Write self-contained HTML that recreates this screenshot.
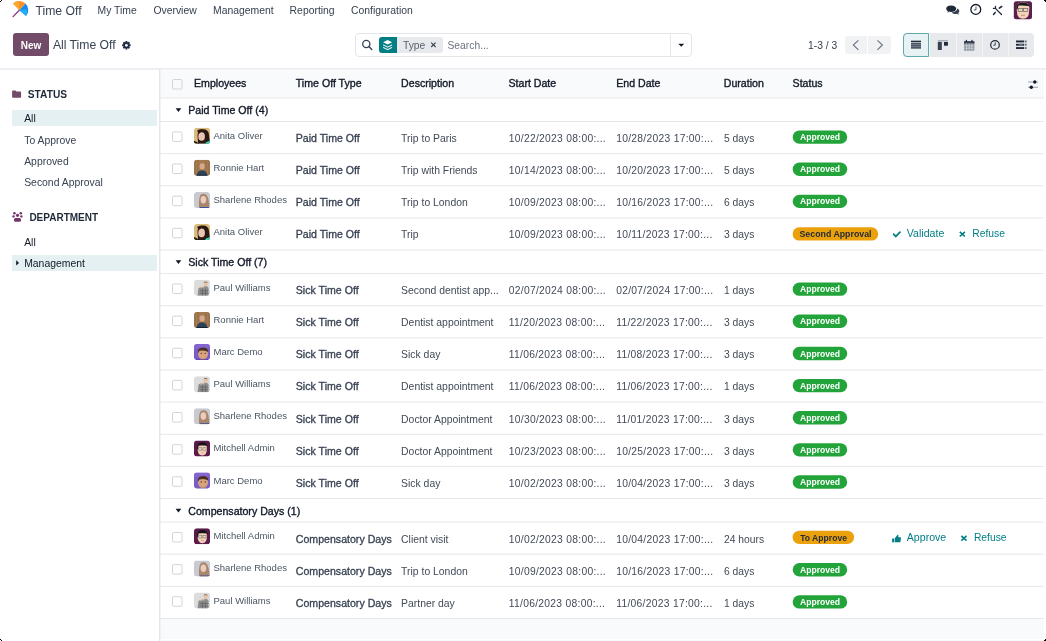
<!DOCTYPE html>
<html><head><meta charset="utf-8"><style>
html,body{margin:0;padding:0;}
body{width:1046px;height:641px;overflow:hidden;position:relative;background:#fff;font-family:"Liberation Sans", sans-serif;}
.t{position:absolute;white-space:nowrap;line-height:1;}
svg.ov{position:absolute;left:0;top:0;}
</style></head><body>
<div style="position:absolute;left:12.5px;top:33px;width:36px;height:23px;background:#714B67;border-radius:3px"></div>
<div style="position:absolute;left:355px;top:33px;width:336.5px;height:24px;border:1px solid #E3E6EA;border-radius:4px;box-sizing:border-box;background:#fff"></div>
<div style="position:absolute;left:670px;top:34px;width:1px;height:22px;background:#E5E7EB"></div>
<div style="position:absolute;left:379px;top:37px;width:63.5px;height:16px;background:#E7E9ED;border-radius:3px"></div>
<div style="position:absolute;left:379px;top:37px;width:17.5px;height:16px;background:#017E84;border-radius:3px 0 0 3px"></div>
<div style="position:absolute;left:844.5px;top:36px;width:46.5px;height:18px;background:#F1F2F4;border-radius:3px"></div>
<div style="position:absolute;left:867.3px;top:36px;width:1px;height:18px;background:#fff"></div>
<div style="position:absolute;left:903px;top:33px;width:131px;height:23.5px;background:#E7E9ED;border-radius:4px"></div>
<div style="position:absolute;left:929px;top:33px;width:1px;height:23.5px;background:#F3F4F6"></div>
<div style="position:absolute;left:956px;top:33px;width:1px;height:23.5px;background:#F3F4F6"></div>
<div style="position:absolute;left:982px;top:33px;width:1px;height:23.5px;background:#F3F4F6"></div>
<div style="position:absolute;left:1007.6px;top:33px;width:1px;height:23.5px;background:#F3F4F6"></div>
<div style="position:absolute;left:903px;top:33px;width:26px;height:23.5px;background:#E6F2F3;border:1px solid #5FA8AC;border-radius:4px 0 0 4px;box-sizing:border-box"></div>
<div style="position:absolute;left:12px;top:110px;width:145px;height:16px;background:#E4F0F1"></div>
<div style="position:absolute;left:12px;top:254.5px;width:145px;height:16px;background:#E4F0F1"></div>
<svg class="ov" width="1046" height="641" viewBox="0 0 1046 641">
<g>
<path d="M19.25 10.2 L13.1 16.6" stroke="#8B2F7A" stroke-width="1.25" stroke-linecap="round"/>
<path d="M19.25 10.2 L13 3.4 A9.2 9.2 0 0 1 25.6 3.6 Z" fill="#F7931E"/>
<path d="M19.25 10.2 L13 3.4 A9.2 9.2 0 0 1 19.0 1.0 Z" fill="#FBB03B" opacity="0.7"/>
<path d="M19.25 10.2 L25.6 3.6 A9 9 0 0 1 26.1 15.9 Z" fill="#1A8CF0"/>
<path d="M19.25 10.2 L26.6 9.5 A9 9 0 0 1 26.1 15.9 Z" fill="#29B6F6" opacity="0.8"/>
</g>
<g fill="#1F2937">
<path d="M951 5.5 C954.5 5.5 956.2 7 956.2 8.7 C956.2 10.5 954.3 11.9 951 11.9 C950.2 11.9 949.5 11.8 949 11.6 L947.6 13 L947.9 11.1 C946.8 10.5 946.2 9.7 946.2 8.7 C946.2 7 947.8 5.5 951 5.5 Z"/>
<path d="M957.2 8.6 C958.6 9.2 959.3 10.1 959.3 11.2 C959.3 12 958.9 12.7 958.3 13.1 L958.7 14.7 L957 13.7 C956.5 13.8 956 13.9 955.5 13.9 C953.6 13.9 952.3 13.3 951.6 12.4 C955 12.2 957.3 10.7 957.2 8.6 Z" fill="#374151"/>
</g>
<circle cx="975.8" cy="9.4" r="4.9" fill="none" stroke="#111827" stroke-width="1.3"/><path d="M976 6.5 V9.9 H973.9" fill="none" stroke="#4B5563" stroke-width="1"/>
<g stroke="#1F2937" stroke-linecap="round">
<path d="M995.6 8.6 L1001.5 14.5" stroke-width="1.3"/>
<path d="M995.5 6.4 V8.4 H993.4" stroke-width="1.2" fill="none"/>
<path d="M1001.7 6.5 L999.3 8.1" stroke-width="1.6"/>
<path d="M995.2 12.4 L993.5 14.4" stroke-width="1.5"/>
</g>
<g>
<rect x="1013.8" y="1.2" width="18.2" height="18" rx="2.5" fill="#5B1F4E"/>
<path d="M1016.5 7 Q1017 2.5 1023 2.6 Q1029 2.5 1029.5 7 L1029 12 Q1029 18.5 1023 18.8 Q1017 18.5 1017 12 Z" fill="#F4D3B8"/>
<path d="M1016.2 8.5 Q1016 2.6 1023 2.5 Q1030 2.6 1029.8 8 L1028.6 6 Q1024 5.2 1018.5 5.6 L1017.4 9.8 Z" fill="#1A1A1A"/>
<rect x="1018.2" y="8.4" width="4.2" height="3" fill="none" stroke="#666" stroke-width="0.7"/>
<rect x="1023.6" y="8.4" width="4.2" height="3" fill="none" stroke="#666" stroke-width="0.7"/>
<path d="M1021 15 Q1023 16 1025 15" stroke="#9a6a5a" stroke-width="0.6" fill="none"/>
</g>
<g transform="translate(126.4 45.3)" fill="#1F2A44"><rect x="-1" y="-4.3" width="2" height="2.4" rx="0.6" transform="rotate(0)"/><rect x="-1" y="-4.3" width="2" height="2.4" rx="0.6" transform="rotate(45)"/><rect x="-1" y="-4.3" width="2" height="2.4" rx="0.6" transform="rotate(90)"/><rect x="-1" y="-4.3" width="2" height="2.4" rx="0.6" transform="rotate(135)"/><rect x="-1" y="-4.3" width="2" height="2.4" rx="0.6" transform="rotate(180)"/><rect x="-1" y="-4.3" width="2" height="2.4" rx="0.6" transform="rotate(225)"/><rect x="-1" y="-4.3" width="2" height="2.4" rx="0.6" transform="rotate(270)"/><rect x="-1" y="-4.3" width="2" height="2.4" rx="0.6" transform="rotate(315)"/><circle r="3" fill="#1F2A44"/><circle r="1.4" fill="#fff"/></g>
<circle cx="366.3" cy="44" r="3.6" fill="none" stroke="#374151" stroke-width="1.3"/><path d="M368.9 46.6 L371.8 49.4" stroke="#374151" stroke-width="1.4" stroke-linecap="round"/>
<path d="M678.3 43.8 H684.2 L681.25 46.8 Z" fill="#111827"/>
<g fill="#fff"><path d="M387.6 40 L392.1 42.3 L387.6 44.6 L383.1 42.3 Z"/>
<path d="M383.1 44.2 L387.6 46.5 L392.1 44.2 V45.4 L387.6 47.7 L383.1 45.4 Z" opacity="0.85"/>
<path d="M383.1 46.8 L387.6 49.1 L392.1 46.8 V48 L387.6 50.3 L383.1 48 Z" opacity="0.85"/></g>
<path d="M431.2 42.6 L435.6 47 M435.6 42.6 L431.2 47" stroke="#374151" stroke-width="1.1"/>
<path d="M858.4 40.3 L853.3 45 L858.4 49.8" fill="none" stroke="#6B7280" stroke-width="1.1"/><path d="M877.4 40.3 L882.4 45 L877.4 49.8" fill="none" stroke="#6B7280" stroke-width="1.1"/>
<rect x="911" y="40.7" width="10" height="1.2" fill="#111827"/><rect x="911" y="42.6" width="10" height="6.1" fill="#4B5563"/><path d="M911 44.6 H921 M911 46.6 H921" stroke="#9CA3AF" stroke-width="0.5"/>
<rect x="937.8" y="40.2" width="10.1" height="1.2" fill="#9CA3AF"/><rect x="937.8" y="41.9" width="4" height="8.1" fill="#374151"/><rect x="944" y="42" width="3.9" height="3.7" fill="#1F2937"/>
<rect x="964" y="41.2" width="10.4" height="9.5" rx="1.2" fill="#8B929C"/><rect x="964" y="41.2" width="10.4" height="2.2" fill="#374151"/><rect x="965.8" y="39.9" width="1.2" height="2.5" fill="#1F2937"/><rect x="971.4" y="39.9" width="1.2" height="2.5" fill="#1F2937"/><path d="M966.6 43.4 V50.7 M969.2 43.4 V50.7 M971.8 43.4 V50.7 M964 45.8 H974.4 M964 48.2 H974.4" stroke="#E5E7EB" stroke-width="0.6"/>
<circle cx="995" cy="44.9" r="4.3" fill="none" stroke="#1F2937" stroke-width="1.2"/><path d="M995.2 42.4 V45.2 H993.4" fill="none" stroke="#374151" stroke-width="1"/>
<g fill="#1F2937"><rect x="1016" y="40.5" width="8" height="1.9"/><rect x="1016" y="43.8" width="8" height="1.9"/><rect x="1016" y="47.1" width="8" height="1.9"/></g><g fill="#6B7280"><rect x="1024.6" y="40.5" width="2.1" height="1.9"/><rect x="1024.6" y="43.8" width="2.1" height="1.9"/><rect x="1024.6" y="47.1" width="2.1" height="1.9"/></g><rect x="1019" y="43.8" width="4" height="1.9" fill="#6B7280"/>
<rect x="0" y="68.3" width="1046" height="1.3" fill="#E5E7EB"/>
<path d="M12.1 91.2 Q12.1 90.4 12.9 90.4 H15.4 L16.3 91.6 H20.3 Q21.1 91.6 21.1 92.4 V97 Q21.1 97.8 20.3 97.8 H12.9 Q12.1 97.8 12.1 97 Z" fill="#714B67"/>
<g fill="#74356B"><circle cx="14.4" cy="213.3" r="1.3"/><circle cx="20.8" cy="213.3" r="1.3"/><circle cx="13.5" cy="216.4" r="1.2"/><circle cx="21.4" cy="216.4" r="1.2"/><circle cx="17.5" cy="215.3" r="1.6"/>
<path d="M14 219.4 Q14 217.9 15.4 217.9 H19.6 Q21 217.9 21 219.4 V220.2 Q21 221.7 19.5 221.7 H15.5 Q14 221.7 14 220.2 Z"/></g>
<path d="M16.2 260.2 L19 262.9 L16.2 265.6 Z" fill="#111827"/>
<rect x="160" y="70.6" width="884" height="27" fill="#F9FAFB"/>
<rect x="160" y="97.5" width="884" height="1" fill="#E5E7EB"/>
<rect x="172.5" y="79.5" width="9.5" height="9.5" rx="1" fill="none" stroke="#D1D5DB" stroke-width="1"/>
<path d="M1028 82 H1038 M1028 87.3 H1038" stroke="#9CA3AF" stroke-width="1.1"/><circle cx="1034.8" cy="82" r="1.7" fill="#111827"/><circle cx="1031.3" cy="87.3" r="1.7" fill="#111827"/>
<path d="M175.6 108.30 H181.3 L178.45 111.90 Z" fill="#111827"/>
<rect x="160" y="121.00" width="884" height="1" fill="#E5E7EB"/>
<rect x="172.5" y="131.90" width="9.5" height="9.5" rx="1" fill="#fff" stroke="#D1D5DB" stroke-width="1"/>
<g transform="translate(194 127.70)"><clipPath id="c1215"><rect width="16" height="16" rx="2.5"/></clipPath><g clip-path="url(#c1215)"><rect width="16" height="16" rx="2.5" fill="#D9BC7C"/><path d="M4 16 L3.5 7 Q4 1.5 9 1.5 Q14.5 1.5 15 7 L16 16 Z" fill="#2A1812"/><ellipse cx="7.6" cy="8.8" rx="3.3" ry="4.3" fill="#EBC3B5"/><path d="M3 3 Q6 1 9 2 L5 6 Z" fill="#2A1812"/><path d="M12 14.5 L16 13 V16 H11 Z" fill="#3FD6C0"/><path d="M0 13 Q3 14 5 16 H0 Z" fill="#1b1010"/></g></g>
<rect x="792.7" y="130.40" width="54.5" height="13.4" rx="6.7" fill="#23A43A"/>
<rect x="160" y="153.14" width="884" height="1" fill="#E5E7EB"/>
<rect x="172.5" y="164.04" width="9.5" height="9.5" rx="1" fill="#fff" stroke="#D1D5DB" stroke-width="1"/>
<g transform="translate(194 159.84)"><clipPath id="c1536"><rect width="16" height="16" rx="2.5"/></clipPath><g clip-path="url(#c1536)"><rect width="16" height="16" rx="2.5" fill="#A57B52"/><path d="M1 0 V16 M4 0 V16 M12 0 V16 M15 0 V16" stroke="#8B6340" stroke-width="0.6"/><ellipse cx="8.2" cy="6.5" rx="2.6" ry="3.2" fill="#D2AA8F"/><path d="M2.5 16 Q3 10.5 8 10.3 Q13 10.5 13.5 16 Z" fill="#2D4458"/><path d="M2.5 16 H13.5 V15 H2.5Z" fill="#14203a"/></g></g>
<rect x="792.7" y="162.54" width="54.5" height="13.4" rx="6.7" fill="#23A43A"/>
<rect x="160" y="185.28" width="884" height="1" fill="#E5E7EB"/>
<rect x="172.5" y="196.18" width="9.5" height="9.5" rx="1" fill="#fff" stroke="#D1D5DB" stroke-width="1"/>
<g transform="translate(194 191.98)"><clipPath id="c1858"><rect width="16" height="16" rx="2.5"/></clipPath><g clip-path="url(#c1858)"><rect width="16" height="16" rx="2.5" fill="#C9C9D2"/><path d="M5 16 Q4.5 6 6.5 3 Q9 1 12 2.5 Q15 5 15.5 16 Z" fill="#A9876C"/><ellipse cx="9.4" cy="7.8" rx="2.8" ry="3.8" fill="#EBCBBE"/><path d="M6 15 H16 V16 H6Z" fill="#3b4fa0"/></g></g>
<rect x="792.7" y="194.68" width="54.5" height="13.4" rx="6.7" fill="#23A43A"/>
<rect x="160" y="217.42" width="884" height="1" fill="#E5E7EB"/>
<rect x="172.5" y="228.32" width="9.5" height="9.5" rx="1" fill="#fff" stroke="#D1D5DB" stroke-width="1"/>
<g transform="translate(194 224.12)"><clipPath id="c2179"><rect width="16" height="16" rx="2.5"/></clipPath><g clip-path="url(#c2179)"><rect width="16" height="16" rx="2.5" fill="#D9BC7C"/><path d="M4 16 L3.5 7 Q4 1.5 9 1.5 Q14.5 1.5 15 7 L16 16 Z" fill="#2A1812"/><ellipse cx="7.6" cy="8.8" rx="3.3" ry="4.3" fill="#EBC3B5"/><path d="M3 3 Q6 1 9 2 L5 6 Z" fill="#2A1812"/><path d="M12 14.5 L16 13 V16 H11 Z" fill="#3FD6C0"/><path d="M0 13 Q3 14 5 16 H0 Z" fill="#1b1010"/></g></g>
<rect x="792.6" y="227.32" width="85.6" height="13.3" rx="6.65" fill="#EBA10C"/>
<path d="M893.1 233.72 L895.8 236.42 L900.5 231.62" fill="none" stroke="#017E84" stroke-width="1.7"/>
<path d="M959.8 231.82 L964.9 236.52 M964.9 231.82 L959.8 236.52" stroke="#017E84" stroke-width="1.6"/>
<rect x="160" y="249.56" width="884" height="1" fill="#E5E7EB"/>
<path d="M175.6 260.36 H181.3 L178.45 263.96 Z" fill="#111827"/>
<rect x="160" y="273.06" width="884" height="1" fill="#E5E7EB"/>
<rect x="172.5" y="283.96" width="9.5" height="9.5" rx="1" fill="#fff" stroke="#D1D5DB" stroke-width="1"/>
<g transform="translate(194 279.76)"><clipPath id="c2736"><rect width="16" height="16" rx="2.5"/></clipPath><g clip-path="url(#c2736)"><rect width="16" height="16" rx="2.5" fill="#DCDCDC"/><path d="M3.5 16 L4.5 8.2 Q8 6.5 10 7.5 L11 5 Q13 6.5 14.5 8 L14.5 16 Z" fill="#8E8E8E"/><path d="M8.5 9 V16 M11.5 9 V16 M6 11 H14.5 M6 13.5 H14.5" stroke="#5A5A5A" stroke-width="0.6"/><ellipse cx="11.7" cy="4.5" rx="2" ry="2.3" fill="#E8C5A8"/><path d="M9.8 3.3 Q11.5 1.8 13.6 3.3 L13.3 2.2 Q11.5 1.2 10 2.3Z" fill="#8a4a2a"/><path d="M6.2 7.4 L10 6.4 L10.3 7.6 L6.5 8.6Z" fill="#D9B58A"/></g></g>
<rect x="792.7" y="282.46" width="54.5" height="13.4" rx="6.7" fill="#23A43A"/>
<rect x="160" y="305.20" width="884" height="1" fill="#E5E7EB"/>
<rect x="172.5" y="316.10" width="9.5" height="9.5" rx="1" fill="#fff" stroke="#D1D5DB" stroke-width="1"/>
<g transform="translate(194 311.90)"><clipPath id="c3057"><rect width="16" height="16" rx="2.5"/></clipPath><g clip-path="url(#c3057)"><rect width="16" height="16" rx="2.5" fill="#A57B52"/><path d="M1 0 V16 M4 0 V16 M12 0 V16 M15 0 V16" stroke="#8B6340" stroke-width="0.6"/><ellipse cx="8.2" cy="6.5" rx="2.6" ry="3.2" fill="#D2AA8F"/><path d="M2.5 16 Q3 10.5 8 10.3 Q13 10.5 13.5 16 Z" fill="#2D4458"/><path d="M2.5 16 H13.5 V15 H2.5Z" fill="#14203a"/></g></g>
<rect x="792.7" y="314.60" width="54.5" height="13.4" rx="6.7" fill="#23A43A"/>
<rect x="160" y="337.34" width="884" height="1" fill="#E5E7EB"/>
<rect x="172.5" y="348.24" width="9.5" height="9.5" rx="1" fill="#fff" stroke="#D1D5DB" stroke-width="1"/>
<g transform="translate(194 344.04)"><clipPath id="c3378"><rect width="16" height="16" rx="2.5"/></clipPath><g clip-path="url(#c3378)"><rect width="16" height="16" rx="2.5" fill="#7A5CC9"/><path d="M0 0 H16 V5 Q8 2 0 5 Z" fill="#8A6AD6" opacity="0.6"/><ellipse cx="9" cy="9.6" rx="5" ry="5.9" fill="#D7A47E"/><path d="M3.8 9.5 Q3.3 3.3 9 3.4 Q14.2 3.4 14.2 8 Q11 5.6 5.5 6.8 Z" fill="#4A3020"/><circle cx="7.3" cy="9.3" r="0.7" fill="#3a2a20"/><circle cx="11.2" cy="9.3" r="0.7" fill="#3a2a20"/><path d="M5.5 13 Q9 16 12.5 13 L12 15.5 H6 Z" fill="#B88560" opacity="0.6"/><path d="M2 16 H14 V15.5 H2Z" fill="#4b2bb0"/></g></g>
<rect x="792.7" y="346.74" width="54.5" height="13.4" rx="6.7" fill="#23A43A"/>
<rect x="160" y="369.48" width="884" height="1" fill="#E5E7EB"/>
<rect x="172.5" y="380.38" width="9.5" height="9.5" rx="1" fill="#fff" stroke="#D1D5DB" stroke-width="1"/>
<g transform="translate(194 376.18)"><clipPath id="c3700"><rect width="16" height="16" rx="2.5"/></clipPath><g clip-path="url(#c3700)"><rect width="16" height="16" rx="2.5" fill="#DCDCDC"/><path d="M3.5 16 L4.5 8.2 Q8 6.5 10 7.5 L11 5 Q13 6.5 14.5 8 L14.5 16 Z" fill="#8E8E8E"/><path d="M8.5 9 V16 M11.5 9 V16 M6 11 H14.5 M6 13.5 H14.5" stroke="#5A5A5A" stroke-width="0.6"/><ellipse cx="11.7" cy="4.5" rx="2" ry="2.3" fill="#E8C5A8"/><path d="M9.8 3.3 Q11.5 1.8 13.6 3.3 L13.3 2.2 Q11.5 1.2 10 2.3Z" fill="#8a4a2a"/><path d="M6.2 7.4 L10 6.4 L10.3 7.6 L6.5 8.6Z" fill="#D9B58A"/></g></g>
<rect x="792.7" y="378.88" width="54.5" height="13.4" rx="6.7" fill="#23A43A"/>
<rect x="160" y="401.62" width="884" height="1" fill="#E5E7EB"/>
<rect x="172.5" y="412.52" width="9.5" height="9.5" rx="1" fill="#fff" stroke="#D1D5DB" stroke-width="1"/>
<g transform="translate(194 408.32)"><clipPath id="c4021"><rect width="16" height="16" rx="2.5"/></clipPath><g clip-path="url(#c4021)"><rect width="16" height="16" rx="2.5" fill="#C9C9D2"/><path d="M5 16 Q4.5 6 6.5 3 Q9 1 12 2.5 Q15 5 15.5 16 Z" fill="#A9876C"/><ellipse cx="9.4" cy="7.8" rx="2.8" ry="3.8" fill="#EBCBBE"/><path d="M6 15 H16 V16 H6Z" fill="#3b4fa0"/></g></g>
<rect x="792.7" y="411.02" width="54.5" height="13.4" rx="6.7" fill="#23A43A"/>
<rect x="160" y="433.76" width="884" height="1" fill="#E5E7EB"/>
<rect x="172.5" y="444.66" width="9.5" height="9.5" rx="1" fill="#fff" stroke="#D1D5DB" stroke-width="1"/>
<g transform="translate(194 440.46)"><clipPath id="c4343"><rect width="16" height="16" rx="2.5"/></clipPath><g clip-path="url(#c4343)"><rect width="16" height="16" rx="2.5" fill="#5A1B4C"/><path d="M3.5 8 Q3.5 14.8 8.3 15 Q13 14.8 13 8 L12.6 5 H4 Z" fill="#F4D2B6"/><path d="M3 8.5 Q2.7 1.8 8.2 1.8 Q13.8 1.8 13.6 7 L12.5 5 Q8 4.3 4.6 5 L4 9Z" fill="#151515"/><rect x="4.7" y="7.3" width="3.2" height="2.4" fill="none" stroke="#777" stroke-width="0.6"/><rect x="8.9" y="7.3" width="3.2" height="2.4" fill="none" stroke="#777" stroke-width="0.6"/><path d="M7 12.2 Q8.4 13 9.8 12.2" stroke="#b08070" stroke-width="0.5" fill="none"/></g></g>
<rect x="792.7" y="443.16" width="54.5" height="13.4" rx="6.7" fill="#23A43A"/>
<rect x="160" y="465.90" width="884" height="1" fill="#E5E7EB"/>
<rect x="172.5" y="476.80" width="9.5" height="9.5" rx="1" fill="#fff" stroke="#D1D5DB" stroke-width="1"/>
<g transform="translate(194 472.60)"><clipPath id="c4664"><rect width="16" height="16" rx="2.5"/></clipPath><g clip-path="url(#c4664)"><rect width="16" height="16" rx="2.5" fill="#7A5CC9"/><path d="M0 0 H16 V5 Q8 2 0 5 Z" fill="#8A6AD6" opacity="0.6"/><ellipse cx="9" cy="9.6" rx="5" ry="5.9" fill="#D7A47E"/><path d="M3.8 9.5 Q3.3 3.3 9 3.4 Q14.2 3.4 14.2 8 Q11 5.6 5.5 6.8 Z" fill="#4A3020"/><circle cx="7.3" cy="9.3" r="0.7" fill="#3a2a20"/><circle cx="11.2" cy="9.3" r="0.7" fill="#3a2a20"/><path d="M5.5 13 Q9 16 12.5 13 L12 15.5 H6 Z" fill="#B88560" opacity="0.6"/><path d="M2 16 H14 V15.5 H2Z" fill="#4b2bb0"/></g></g>
<rect x="792.7" y="475.30" width="54.5" height="13.4" rx="6.7" fill="#23A43A"/>
<rect x="160" y="498.04" width="884" height="1" fill="#E5E7EB"/>
<path d="M175.6 508.84 H181.3 L178.45 512.44 Z" fill="#111827"/>
<rect x="160" y="521.54" width="884" height="1" fill="#E5E7EB"/>
<rect x="172.5" y="532.44" width="9.5" height="9.5" rx="1" fill="#fff" stroke="#D1D5DB" stroke-width="1"/>
<g transform="translate(194 528.24)"><clipPath id="c5220"><rect width="16" height="16" rx="2.5"/></clipPath><g clip-path="url(#c5220)"><rect width="16" height="16" rx="2.5" fill="#5A1B4C"/><path d="M3.5 8 Q3.5 14.8 8.3 15 Q13 14.8 13 8 L12.6 5 H4 Z" fill="#F4D2B6"/><path d="M3 8.5 Q2.7 1.8 8.2 1.8 Q13.8 1.8 13.6 7 L12.5 5 Q8 4.3 4.6 5 L4 9Z" fill="#151515"/><rect x="4.7" y="7.3" width="3.2" height="2.4" fill="none" stroke="#777" stroke-width="0.6"/><rect x="8.9" y="7.3" width="3.2" height="2.4" fill="none" stroke="#777" stroke-width="0.6"/><path d="M7 12.2 Q8.4 13 9.8 12.2" stroke="#b08070" stroke-width="0.5" fill="none"/></g></g>
<rect x="792.6" y="530.64" width="61.5" height="13.4" rx="6.7" fill="#EBA10C"/>
<g fill="#017E84" transform="translate(0 522.54)"><rect x="892.1" y="16" width="2" height="3.8"/><path d="M894.7 16 L897 13 Q897.5 11.8 898.2 12.2 Q898.8 12.8 898.3 14.6 H900.3 Q901.1 14.7 901 15.5 L900.4 19.2 Q900.2 19.8 899.5 19.8 H894.7 Z"/></g>
<path d="M961.3 535.84 L966.5 540.54 M966.5 535.84 L961.3 540.54" stroke="#017E84" stroke-width="1.6"/>
<rect x="160" y="553.68" width="884" height="1" fill="#E5E7EB"/>
<rect x="172.5" y="564.58" width="9.5" height="9.5" rx="1" fill="#fff" stroke="#D1D5DB" stroke-width="1"/>
<g transform="translate(194 560.38)"><clipPath id="c5542"><rect width="16" height="16" rx="2.5"/></clipPath><g clip-path="url(#c5542)"><rect width="16" height="16" rx="2.5" fill="#C9C9D2"/><path d="M5 16 Q4.5 6 6.5 3 Q9 1 12 2.5 Q15 5 15.5 16 Z" fill="#A9876C"/><ellipse cx="9.4" cy="7.8" rx="2.8" ry="3.8" fill="#EBCBBE"/><path d="M6 15 H16 V16 H6Z" fill="#3b4fa0"/></g></g>
<rect x="792.7" y="563.08" width="54.5" height="13.4" rx="6.7" fill="#23A43A"/>
<rect x="160" y="585.82" width="884" height="1" fill="#E5E7EB"/>
<rect x="172.5" y="596.72" width="9.5" height="9.5" rx="1" fill="#fff" stroke="#D1D5DB" stroke-width="1"/>
<g transform="translate(194 592.52)"><clipPath id="c5863"><rect width="16" height="16" rx="2.5"/></clipPath><g clip-path="url(#c5863)"><rect width="16" height="16" rx="2.5" fill="#DCDCDC"/><path d="M3.5 16 L4.5 8.2 Q8 6.5 10 7.5 L11 5 Q13 6.5 14.5 8 L14.5 16 Z" fill="#8E8E8E"/><path d="M8.5 9 V16 M11.5 9 V16 M6 11 H14.5 M6 13.5 H14.5" stroke="#5A5A5A" stroke-width="0.6"/><ellipse cx="11.7" cy="4.5" rx="2" ry="2.3" fill="#E8C5A8"/><path d="M9.8 3.3 Q11.5 1.8 13.6 3.3 L13.3 2.2 Q11.5 1.2 10 2.3Z" fill="#8a4a2a"/><path d="M6.2 7.4 L10 6.4 L10.3 7.6 L6.5 8.6Z" fill="#D9B58A"/></g></g>
<rect x="792.7" y="595.22" width="54.5" height="13.4" rx="6.7" fill="#23A43A"/>
<rect x="160" y="617.96" width="884" height="1" fill="#E5E7EB"/>
<rect x="160" y="618.96" width="884" height="22.04" fill="#F9FAFB"/>
<rect x="160" y="639" width="886" height="1" fill="#fff"/>
<rect x="159" y="69.5" width="1.5" height="572" fill="#E5E7EB"/>
<rect x="1" y="0" width="1" height="1" fill="#000" shape-rendering="crispEdges"/>
<rect x="0" y="1" width="1" height="1" fill="#000" shape-rendering="crispEdges"/>
<rect x="1044" y="0" width="1" height="1" fill="#000" shape-rendering="crispEdges"/>
<rect x="1045" y="0" width="1" height="1" fill="#000" shape-rendering="crispEdges"/>
<rect x="1045" y="1" width="1" height="1" fill="#000" shape-rendering="crispEdges"/>
<rect x="1045" y="639" width="1" height="1" fill="#000" shape-rendering="crispEdges"/>
<rect x="1044" y="640" width="1" height="1" fill="#000" shape-rendering="crispEdges"/>
<rect x="1045" y="640" width="1" height="1" fill="#000" shape-rendering="crispEdges"/>
<rect x="0" y="639" width="1" height="1" fill="#000" shape-rendering="crispEdges"/>
<rect x="1" y="640" width="1" height="1" fill="#000" shape-rendering="crispEdges"/>
</svg>
<div id="tx" style="position:absolute;left:0;top:0;width:1046px;height:641px;will-change:transform">
<div class="t" style="left:35.5px;top:5.00px;font-size:12.2px;font-weight:400;color:#374151;">Time Off</div>
<div class="t" style="left:97.5px;top:6.00px;font-size:10.4px;font-weight:400;color:#374151;">My Time</div>
<div class="t" style="left:153.4px;top:6.00px;font-size:10.4px;font-weight:400;color:#374151;">Overview</div>
<div class="t" style="left:213px;top:6.00px;font-size:10.4px;font-weight:400;color:#374151;">Management</div>
<div class="t" style="left:289.6px;top:6.00px;font-size:10.4px;font-weight:400;color:#374151;">Reporting</div>
<div class="t" style="left:351px;top:6.00px;font-size:10.4px;font-weight:400;color:#374151;">Configuration</div>
<div class="t" style="left:20.7px;top:41.00px;font-size:10px;font-weight:700;color:#FFFFFF;">New</div>
<div class="t" style="left:52.9px;top:39.00px;font-size:12.2px;font-weight:400;color:#374151;">All Time Off</div>
<div class="t" style="left:403px;top:41.00px;font-size:10.3px;font-weight:400;color:#5B6370;">Type</div>
<div class="t" style="left:447.5px;top:41.00px;font-size:10.3px;font-weight:400;color:#6B7280;">Search...</div>
<div class="t" style="left:808px;top:41.00px;font-size:10.3px;font-weight:400;color:#374151;">1-3 / 3</div>
<div class="t" style="left:27.8px;top:90.00px;font-size:10.2px;font-weight:700;color:#1F2937;">STATUS</div>
<div class="t" style="left:24.2px;top:114.00px;font-size:10.4px;font-weight:400;color:#111827;">All</div>
<div class="t" style="left:24.2px;top:136.00px;font-size:10.4px;font-weight:400;color:#374151;">To Approve</div>
<div class="t" style="left:24.2px;top:157.00px;font-size:10.4px;font-weight:400;color:#374151;">Approved</div>
<div class="t" style="left:24.2px;top:178.00px;font-size:10.4px;font-weight:400;color:#374151;">Second Approval</div>
<div class="t" style="left:29.4px;top:213.00px;font-size:10px;font-weight:700;color:#1F2937;">DEPARTMENT</div>
<div class="t" style="left:24.2px;top:238.00px;font-size:10.4px;font-weight:400;color:#111827;">All</div>
<div class="t" style="left:24.2px;top:259.00px;font-size:10.4px;font-weight:400;color:#111827;">Management</div>
<div class="t" style="left:194px;top:78.00px;font-size:10.6px;font-weight:400;color:#111827;-webkit-text-stroke:0.35px #111827;">Employees</div>
<div class="t" style="left:295.8px;top:78.00px;font-size:10.6px;font-weight:400;color:#111827;-webkit-text-stroke:0.35px #111827;">Time Off Type</div>
<div class="t" style="left:401.1px;top:78.00px;font-size:10.6px;font-weight:400;color:#111827;-webkit-text-stroke:0.35px #111827;">Description</div>
<div class="t" style="left:508.5px;top:78.00px;font-size:10.6px;font-weight:400;color:#111827;-webkit-text-stroke:0.35px #111827;">Start Date</div>
<div class="t" style="left:616.2px;top:78.00px;font-size:10.6px;font-weight:400;color:#111827;-webkit-text-stroke:0.35px #111827;">End Date</div>
<div class="t" style="left:723.8px;top:78.00px;font-size:10.6px;font-weight:400;color:#111827;-webkit-text-stroke:0.35px #111827;">Duration</div>
<div class="t" style="left:792.6px;top:78.00px;font-size:10.6px;font-weight:400;color:#111827;-webkit-text-stroke:0.35px #111827;">Status</div>
<div class="t" style="left:188.3px;top:105.00px;font-size:10.6px;font-weight:400;color:#111827;-webkit-text-stroke:0.35px #111827;">Paid Time Off (4)</div>
<div class="t" style="left:213.5px;top:131.00px;font-size:9.5px;font-weight:400;color:#4B5563;">Anita Oliver</div>
<div class="t" style="left:295.8px;top:133.00px;font-size:10.6px;font-weight:400;color:#374151;-webkit-text-stroke:0.3px #374151;">Paid Time Off</div>
<div class="t" style="left:401.1px;top:134.00px;font-size:10.4px;font-weight:400;color:#414A57;">Trip to Paris</div>
<div class="t" style="left:508.8px;top:134.00px;font-size:10.3px;font-weight:400;color:#414A57;letter-spacing:0.28px">10/22/2023 08:00:...</div>
<div class="t" style="left:616.2px;top:134.00px;font-size:10.3px;font-weight:400;color:#414A57;letter-spacing:0.28px">10/28/2023 17:00:...</div>
<div class="t" style="left:724px;top:134.00px;font-size:10.3px;font-weight:400;color:#414A57;">5 days</div>
<div class="t" style="left:800px;top:133.00px;font-size:8.6px;font-weight:700;color:#fff;">Approved</div>
<div class="t" style="left:213.5px;top:163.00px;font-size:9.5px;font-weight:400;color:#4B5563;">Ronnie Hart</div>
<div class="t" style="left:295.8px;top:165.00px;font-size:10.6px;font-weight:400;color:#374151;-webkit-text-stroke:0.3px #374151;">Paid Time Off</div>
<div class="t" style="left:401.1px;top:166.00px;font-size:10.4px;font-weight:400;color:#414A57;">Trip with Friends</div>
<div class="t" style="left:508.8px;top:166.00px;font-size:10.3px;font-weight:400;color:#414A57;letter-spacing:0.28px">10/14/2023 08:00:...</div>
<div class="t" style="left:616.2px;top:166.00px;font-size:10.3px;font-weight:400;color:#414A57;letter-spacing:0.28px">10/20/2023 17:00:...</div>
<div class="t" style="left:724px;top:166.00px;font-size:10.3px;font-weight:400;color:#414A57;">5 days</div>
<div class="t" style="left:800px;top:165.00px;font-size:8.6px;font-weight:700;color:#fff;">Approved</div>
<div class="t" style="left:213.5px;top:195.00px;font-size:9.5px;font-weight:400;color:#4B5563;">Sharlene Rhodes</div>
<div class="t" style="left:295.8px;top:197.00px;font-size:10.6px;font-weight:400;color:#374151;-webkit-text-stroke:0.3px #374151;">Paid Time Off</div>
<div class="t" style="left:401.1px;top:198.00px;font-size:10.4px;font-weight:400;color:#414A57;">Trip to London</div>
<div class="t" style="left:508.8px;top:198.00px;font-size:10.3px;font-weight:400;color:#414A57;letter-spacing:0.28px">10/09/2023 08:00:...</div>
<div class="t" style="left:616.2px;top:198.00px;font-size:10.3px;font-weight:400;color:#414A57;letter-spacing:0.28px">10/16/2023 17:00:...</div>
<div class="t" style="left:724px;top:198.00px;font-size:10.3px;font-weight:400;color:#414A57;">6 days</div>
<div class="t" style="left:800px;top:197.00px;font-size:8.6px;font-weight:700;color:#fff;">Approved</div>
<div class="t" style="left:213.5px;top:227.00px;font-size:9.5px;font-weight:400;color:#4B5563;">Anita Oliver</div>
<div class="t" style="left:295.8px;top:229.00px;font-size:10.6px;font-weight:400;color:#374151;-webkit-text-stroke:0.3px #374151;">Paid Time Off</div>
<div class="t" style="left:401.1px;top:230.00px;font-size:10.4px;font-weight:400;color:#414A57;">Trip</div>
<div class="t" style="left:508.8px;top:230.00px;font-size:10.3px;font-weight:400;color:#414A57;letter-spacing:0.28px">10/09/2023 08:00:...</div>
<div class="t" style="left:616.2px;top:230.00px;font-size:10.3px;font-weight:400;color:#414A57;letter-spacing:0.28px">10/11/2023 17:00:...</div>
<div class="t" style="left:724px;top:230.00px;font-size:10.3px;font-weight:400;color:#414A57;">3 days</div>
<div class="t" style="left:799.5px;top:230.00px;font-size:8.8px;font-weight:700;color:#1F2937;">Second Approval</div>
<div class="t" style="left:906.8px;top:228.00px;font-size:10.6px;font-weight:400;color:#017E84;">Validate</div>
<div class="t" style="left:972.3px;top:229.00px;font-size:10.3px;font-weight:400;color:#017E84;">Refuse</div>
<div class="t" style="left:188.3px;top:257.00px;font-size:10.6px;font-weight:400;color:#111827;-webkit-text-stroke:0.35px #111827;">Sick Time Off (7)</div>
<div class="t" style="left:213.5px;top:283.00px;font-size:9.5px;font-weight:400;color:#4B5563;">Paul Williams</div>
<div class="t" style="left:295.8px;top:285.00px;font-size:10.6px;font-weight:400;color:#374151;-webkit-text-stroke:0.3px #374151;">Sick Time Off</div>
<div class="t" style="left:401.1px;top:286.00px;font-size:10.4px;font-weight:400;color:#414A57;">Second dentist app...</div>
<div class="t" style="left:508.8px;top:286.00px;font-size:10.3px;font-weight:400;color:#414A57;letter-spacing:0.28px">02/07/2024 08:00:...</div>
<div class="t" style="left:616.2px;top:286.00px;font-size:10.3px;font-weight:400;color:#414A57;letter-spacing:0.28px">02/07/2024 17:00:...</div>
<div class="t" style="left:724px;top:286.00px;font-size:10.3px;font-weight:400;color:#414A57;">1 days</div>
<div class="t" style="left:800px;top:285.00px;font-size:8.6px;font-weight:700;color:#fff;">Approved</div>
<div class="t" style="left:213.5px;top:315.00px;font-size:9.5px;font-weight:400;color:#4B5563;">Ronnie Hart</div>
<div class="t" style="left:295.8px;top:317.00px;font-size:10.6px;font-weight:400;color:#374151;-webkit-text-stroke:0.3px #374151;">Sick Time Off</div>
<div class="t" style="left:401.1px;top:318.00px;font-size:10.4px;font-weight:400;color:#414A57;">Dentist appointment</div>
<div class="t" style="left:508.8px;top:318.00px;font-size:10.3px;font-weight:400;color:#414A57;letter-spacing:0.28px">11/20/2023 08:00:...</div>
<div class="t" style="left:616.2px;top:318.00px;font-size:10.3px;font-weight:400;color:#414A57;letter-spacing:0.28px">11/22/2023 17:00:...</div>
<div class="t" style="left:724px;top:318.00px;font-size:10.3px;font-weight:400;color:#414A57;">3 days</div>
<div class="t" style="left:800px;top:317.00px;font-size:8.6px;font-weight:700;color:#fff;">Approved</div>
<div class="t" style="left:213.5px;top:347.00px;font-size:9.5px;font-weight:400;color:#4B5563;">Marc Demo</div>
<div class="t" style="left:295.8px;top:349.00px;font-size:10.6px;font-weight:400;color:#374151;-webkit-text-stroke:0.3px #374151;">Sick Time Off</div>
<div class="t" style="left:401.1px;top:350.00px;font-size:10.4px;font-weight:400;color:#414A57;">Sick day</div>
<div class="t" style="left:508.8px;top:350.00px;font-size:10.3px;font-weight:400;color:#414A57;letter-spacing:0.28px">11/06/2023 08:00:...</div>
<div class="t" style="left:616.2px;top:350.00px;font-size:10.3px;font-weight:400;color:#414A57;letter-spacing:0.28px">11/08/2023 17:00:...</div>
<div class="t" style="left:724px;top:350.00px;font-size:10.3px;font-weight:400;color:#414A57;">3 days</div>
<div class="t" style="left:800px;top:350.00px;font-size:8.6px;font-weight:700;color:#fff;">Approved</div>
<div class="t" style="left:213.5px;top:379.00px;font-size:9.5px;font-weight:400;color:#4B5563;">Paul Williams</div>
<div class="t" style="left:295.8px;top:381.00px;font-size:10.6px;font-weight:400;color:#374151;-webkit-text-stroke:0.3px #374151;">Sick Time Off</div>
<div class="t" style="left:401.1px;top:382.00px;font-size:10.4px;font-weight:400;color:#414A57;">Dentist appointment</div>
<div class="t" style="left:508.8px;top:382.00px;font-size:10.3px;font-weight:400;color:#414A57;letter-spacing:0.28px">11/06/2023 08:00:...</div>
<div class="t" style="left:616.2px;top:382.00px;font-size:10.3px;font-weight:400;color:#414A57;letter-spacing:0.28px">11/06/2023 17:00:...</div>
<div class="t" style="left:724px;top:382.00px;font-size:10.3px;font-weight:400;color:#414A57;">1 days</div>
<div class="t" style="left:800px;top:382.00px;font-size:8.6px;font-weight:700;color:#fff;">Approved</div>
<div class="t" style="left:213.5px;top:411.00px;font-size:9.5px;font-weight:400;color:#4B5563;">Sharlene Rhodes</div>
<div class="t" style="left:295.8px;top:414.00px;font-size:10.6px;font-weight:400;color:#374151;-webkit-text-stroke:0.3px #374151;">Sick Time Off</div>
<div class="t" style="left:401.1px;top:415.00px;font-size:10.4px;font-weight:400;color:#414A57;">Doctor Appointment</div>
<div class="t" style="left:508.8px;top:415.00px;font-size:10.3px;font-weight:400;color:#414A57;letter-spacing:0.28px">10/30/2023 08:00:...</div>
<div class="t" style="left:616.2px;top:415.00px;font-size:10.3px;font-weight:400;color:#414A57;letter-spacing:0.28px">11/01/2023 17:00:...</div>
<div class="t" style="left:724px;top:415.00px;font-size:10.3px;font-weight:400;color:#414A57;">3 days</div>
<div class="t" style="left:800px;top:414.00px;font-size:8.6px;font-weight:700;color:#fff;">Approved</div>
<div class="t" style="left:213.5px;top:443.00px;font-size:9.5px;font-weight:400;color:#4B5563;">Mitchell Admin</div>
<div class="t" style="left:295.8px;top:446.00px;font-size:10.6px;font-weight:400;color:#374151;-webkit-text-stroke:0.3px #374151;">Sick Time Off</div>
<div class="t" style="left:401.1px;top:447.00px;font-size:10.4px;font-weight:400;color:#414A57;">Doctor Appointment</div>
<div class="t" style="left:508.8px;top:447.00px;font-size:10.3px;font-weight:400;color:#414A57;letter-spacing:0.28px">10/23/2023 08:00:...</div>
<div class="t" style="left:616.2px;top:447.00px;font-size:10.3px;font-weight:400;color:#414A57;letter-spacing:0.28px">10/25/2023 17:00:...</div>
<div class="t" style="left:724px;top:447.00px;font-size:10.3px;font-weight:400;color:#414A57;">3 days</div>
<div class="t" style="left:800px;top:446.00px;font-size:8.6px;font-weight:700;color:#fff;">Approved</div>
<div class="t" style="left:213.5px;top:476.00px;font-size:9.5px;font-weight:400;color:#4B5563;">Marc Demo</div>
<div class="t" style="left:295.8px;top:478.00px;font-size:10.6px;font-weight:400;color:#374151;-webkit-text-stroke:0.3px #374151;">Sick Time Off</div>
<div class="t" style="left:401.1px;top:479.00px;font-size:10.4px;font-weight:400;color:#414A57;">Sick day</div>
<div class="t" style="left:508.8px;top:479.00px;font-size:10.3px;font-weight:400;color:#414A57;letter-spacing:0.28px">10/02/2023 08:00:...</div>
<div class="t" style="left:616.2px;top:479.00px;font-size:10.3px;font-weight:400;color:#414A57;letter-spacing:0.28px">10/04/2023 17:00:...</div>
<div class="t" style="left:724px;top:479.00px;font-size:10.3px;font-weight:400;color:#414A57;">3 days</div>
<div class="t" style="left:800px;top:478.00px;font-size:8.6px;font-weight:700;color:#fff;">Approved</div>
<div class="t" style="left:188.3px;top:506.00px;font-size:10.6px;font-weight:400;color:#111827;-webkit-text-stroke:0.35px #111827;">Compensatory Days (1)</div>
<div class="t" style="left:213.5px;top:531.00px;font-size:9.5px;font-weight:400;color:#4B5563;">Mitchell Admin</div>
<div class="t" style="left:295.8px;top:534.00px;font-size:10.6px;font-weight:400;color:#374151;-webkit-text-stroke:0.3px #374151;">Compensatory Days</div>
<div class="t" style="left:401.1px;top:535.00px;font-size:10.4px;font-weight:400;color:#414A57;">Client visit</div>
<div class="t" style="left:508.8px;top:535.00px;font-size:10.3px;font-weight:400;color:#414A57;letter-spacing:0.28px">10/02/2023 08:00:...</div>
<div class="t" style="left:616.2px;top:535.00px;font-size:10.3px;font-weight:400;color:#414A57;letter-spacing:0.28px">10/04/2023 17:00:...</div>
<div class="t" style="left:724px;top:535.00px;font-size:10.3px;font-weight:400;color:#414A57;">24 hours</div>
<div class="t" style="left:800.2px;top:534.00px;font-size:8.6px;font-weight:700;color:#1F2937;">To Approve</div>
<div class="t" style="left:906.8px;top:532.00px;font-size:10.6px;font-weight:400;color:#017E84;">Approve</div>
<div class="t" style="left:973.9px;top:533.00px;font-size:10.3px;font-weight:400;color:#017E84;">Refuse</div>
<div class="t" style="left:213.5px;top:563.00px;font-size:9.5px;font-weight:400;color:#4B5563;">Sharlene Rhodes</div>
<div class="t" style="left:295.8px;top:566.00px;font-size:10.6px;font-weight:400;color:#374151;-webkit-text-stroke:0.3px #374151;">Compensatory Days</div>
<div class="t" style="left:401.1px;top:567.00px;font-size:10.4px;font-weight:400;color:#414A57;">Trip to London</div>
<div class="t" style="left:508.8px;top:567.00px;font-size:10.3px;font-weight:400;color:#414A57;letter-spacing:0.28px">10/09/2023 08:00:...</div>
<div class="t" style="left:616.2px;top:567.00px;font-size:10.3px;font-weight:400;color:#414A57;letter-spacing:0.28px">10/16/2023 17:00:...</div>
<div class="t" style="left:724px;top:567.00px;font-size:10.3px;font-weight:400;color:#414A57;">6 days</div>
<div class="t" style="left:800px;top:566.00px;font-size:8.6px;font-weight:700;color:#fff;">Approved</div>
<div class="t" style="left:213.5px;top:596.00px;font-size:9.5px;font-weight:400;color:#4B5563;">Paul Williams</div>
<div class="t" style="left:295.8px;top:598.00px;font-size:10.6px;font-weight:400;color:#374151;-webkit-text-stroke:0.3px #374151;">Compensatory Days</div>
<div class="t" style="left:401.1px;top:599.00px;font-size:10.4px;font-weight:400;color:#414A57;">Partner day</div>
<div class="t" style="left:508.8px;top:599.00px;font-size:10.3px;font-weight:400;color:#414A57;letter-spacing:0.28px">11/06/2023 08:00:...</div>
<div class="t" style="left:616.2px;top:599.00px;font-size:10.3px;font-weight:400;color:#414A57;letter-spacing:0.28px">11/06/2023 17:00:...</div>
<div class="t" style="left:724px;top:599.00px;font-size:10.3px;font-weight:400;color:#414A57;">1 days</div>
<div class="t" style="left:800px;top:598.00px;font-size:8.6px;font-weight:700;color:#fff;">Approved</div>
</div>
</body></html>
